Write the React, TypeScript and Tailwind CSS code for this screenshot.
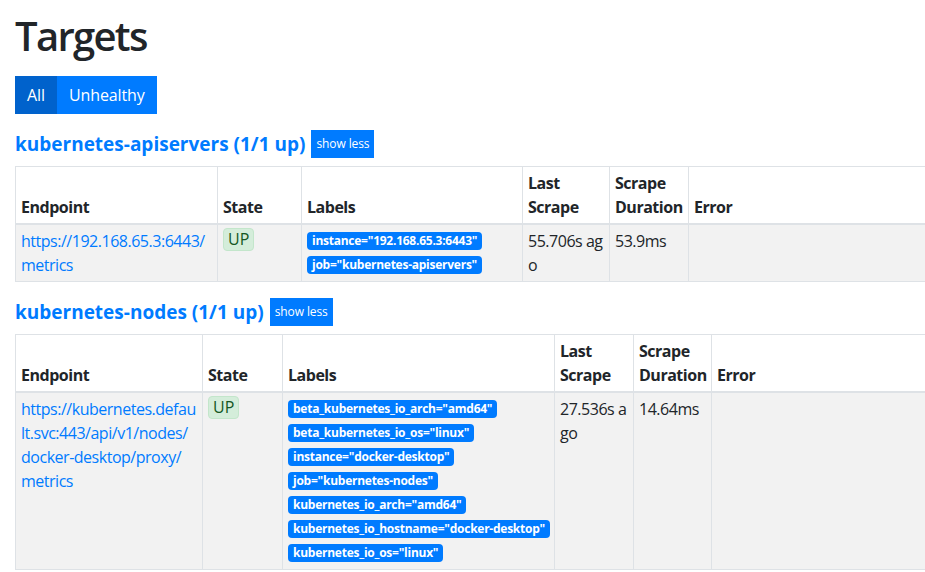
import React from 'react';

type Target = {
  endpoint: string[];
  labels: string[];
  lastScrape: string[];
  duration: string;
};

type Pool = {
  name: string;
  up: string;
  width: string;
  cols: string[];
  target: Target;
};

const POOLS: Pool[] = [
  {
    name: 'kubernetes-apiservers',
    up: '(1/1 up)',
    width: 'w-[1073px]',
    cols: ['w-[202px]', 'w-[84px]', 'w-[221px]', 'w-[87px]', 'w-[79px]', 'w-[400px]'],
    target: {
      endpoint: ['https://192.168.65.3:6443/', 'metrics'],
      labels: ['instance="192.168.65.3:6443"', 'job="kubernetes-apiservers"'],
      lastScrape: ['55.706s ag', 'o'],
      duration: '53.9ms',
    },
  },
  {
    name: 'kubernetes-nodes',
    up: '(1/1 up)',
    width: 'w-[1096px]',
    cols: ['w-[187px]', 'w-[80px]', 'w-[272px]', 'w-[79px]', 'w-[78px]', 'w-[400px]'],
    target: {
      endpoint: ['https://kubernetes.defau', 'lt.svc:443/api/v1/nodes/', 'docker-desktop/proxy/', 'metrics'],
      labels: [
        'beta_kubernetes_io_arch="amd64"',
        'beta_kubernetes_io_os="linux"',
        'instance="docker-desktop"',
        'job="kubernetes-nodes"',
        'kubernetes_io_arch="amd64"',
        'kubernetes_io_hostname="docker-desktop"',
        'kubernetes_io_os="linux"',
      ],
      lastScrape: ['27.536s a', 'go'],
      duration: '14.64ms',
    },
  },
];

const HEADERS: React.ReactNode[] = [
  'Endpoint',
  'State',
  'Labels',
  <>
    Last
    <br />
    Scrape
  </>,
  <>
    Scrape
    <br />
    Duration
  </>,
  'Error',
];

function Lines({ lines }: { lines: string[] }) {
  return (
    <>
      {lines.map((l, i) => (
        <div key={i} className="whitespace-nowrap">
          {l}
        </div>
      ))}
    </>
  );
}

function PoolPanel({ pool }: { pool: Pool }) {
  const t = pool.target;
  return (
    <div>
      <div className="flex items-center gap-[6px] h-[32px] mt-[14px] mb-[6px]">
        <a href="#" className="text-[19px] font-bold text-[#007bff] leading-[32px] whitespace-nowrap">
          {pool.name} {pool.up}
        </a>
        <button className="bg-[#007bff] text-white text-[12px] leading-[18px] px-[5px] py-[5px] tracking-[-0.1px]">
          show less
        </button>
      </div>
      <table className={`${pool.width} table-fixed border-collapse text-[16px] leading-6 text-[#212529] tracking-[-0.03em]`}>
        <colgroup>
          {pool.cols.map((c, i) => (
            <col key={i} className={c} />
          ))}
        </colgroup>
        <thead>
          <tr>
            {HEADERS.map((h, i) => (
              <th
                key={i}
                className="border border-[#dee2e6] border-b-2 px-[5px] py-1 text-left align-bottom font-bold whitespace-nowrap"
              >
                {h}
              </th>
            ))}
          </tr>
        </thead>
        <tbody>
          <tr className="bg-[#f2f2f2]">
            <td className="border border-[#dee2e6] px-[5px] py-1 align-top text-[#007bff]">
              <Lines lines={t.endpoint} />
            </td>
            <td className="border border-[#dee2e6] px-[5px] py-1 align-top">
              <span className="inline-block align-top -mt-px bg-[#d4edda] border border-[#c3e6cb] text-[#155724] rounded-[4px] px-[4px] leading-[21px] tracking-normal">
                UP
              </span>
            </td>
            <td className="border border-[#dee2e6] px-[5px] py-1 align-top">
              {t.labels.map((l) => (
                <div key={l} className="h-6 flex items-center">
                  <span className="bg-[#007bff] text-white text-[12px] font-bold leading-none px-[5px] py-[3px] rounded-[4px] whitespace-nowrap tracking-[-0.25px]">
                    {l}
                  </span>
                </div>
              ))}
            </td>
            <td className="border border-[#dee2e6] px-[5px] py-1 align-top">
              <Lines lines={t.lastScrape} />
            </td>
            <td className="border border-[#dee2e6] px-[5px] py-1 align-top">{t.duration}</td>
            <td className="border border-[#dee2e6] px-[5px] py-1 align-top"></td>
          </tr>
        </tbody>
      </table>
    </div>
  );
}

export default function App() {
  return (
    <div className="w-[925px] h-[572px] overflow-hidden bg-white font-['Open_Sans',sans-serif] text-[#212529]">
      <div className="px-[15px] pt-3">
        <h1 className="text-[40px] font-semibold leading-[48px] mb-4 tracking-[-1.7px]">Targets</h1>
        <div className="flex">
          <button className="bg-[#0062cc] text-white text-[16px] leading-6 px-3 py-[7px] tracking-[-0.1px]">All</button>
          <button className="bg-[#007bff] text-white text-[16px] leading-6 px-3 py-[7px] tracking-[-0.1px]">Unhealthy</button>
        </div>
        {POOLS.map((p) => (
          <PoolPanel key={p.name} pool={p} />
        ))}
      </div>
    </div>
  );
}
